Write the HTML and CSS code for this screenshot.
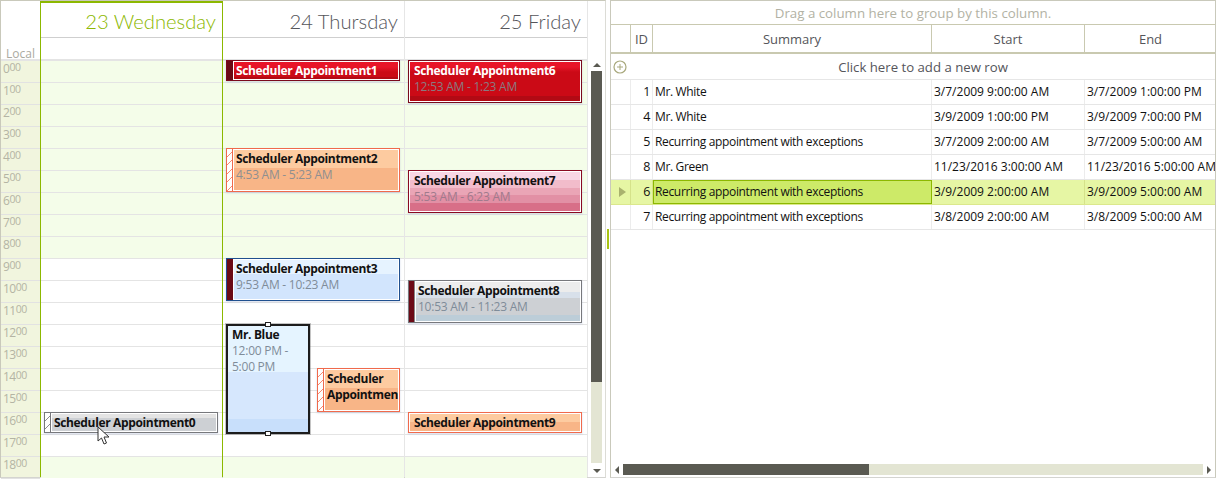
FILE: index.html
```html
<!DOCTYPE html>
<html>
<head>
    <title>Scheduler and grid</title>
    <link rel="stylesheet" href="styles.css">
</head>
<body>
    <div class="app">
        <!-- scheduler -->
        <div class="scheduler">
            <div class="ruler">
                <div class="ruler-head">Local</div>
                <div class="hour">0<sup>00</sup></div>
                <div class="hour">1<sup>00</sup></div>
                <div class="hour">2<sup>00</sup></div>
                <div class="hour">3<sup>00</sup></div>
                <div class="hour">4<sup>00</sup></div>
                <div class="hour">5<sup>00</sup></div>
                <div class="hour">6<sup>00</sup></div>
                <div class="hour">7<sup>00</sup></div>
                <div class="hour">8<sup>00</sup></div>
                <div class="hour">9<sup>00</sup></div>
                <div class="hour">10<sup>00</sup></div>
                <div class="hour">11<sup>00</sup></div>
                <div class="hour">12<sup>00</sup></div>
                <div class="hour">13<sup>00</sup></div>
                <div class="hour">14<sup>00</sup></div>
                <div class="hour">15<sup>00</sup></div>
                <div class="hour">16<sup>00</sup></div>
                <div class="hour">17<sup>00</sup></div>
                <div class="hour">18<sup>00</sup></div>
            </div>

            <div class="day today">
                <div class="day-title">23 Wednesday</div>
                <div class="all-day"></div>
                <div class="day-body">
                    <div class="appt silver hatch one-line" style="left:3px;top:351px;width:174px;height:21px">
                        <div class="strip"></div>
                        <div class="appt-body"><b>Scheduler Appointment0</b></div>
                    </div>
                    <svg class="cursor" width="14" height="20" viewBox="0 0 14 20">
                        <path d="M1 1 V15 L4.500 12 L7 18 L9.500 17 L7 11 H12 Z" fill="#fff" stroke="#333" stroke-width="1"/>
                    </svg>
                </div>
            </div>

            <div class="day">
                <div class="day-title">24 Thursday</div>
                <div class="all-day"></div>
                <div class="day-body">
                    <div class="appt red dark-strip one-line" style="left:3px;top:-1px;width:174px;height:21px">
                        <div class="strip"></div>
                        <div class="appt-body"><b>Scheduler Appointment1</b></div>
                    </div>
                    <div class="appt orange hatch" style="left:3px;top:87px;width:174px;height:44px">
                        <div class="strip"></div>
                        <div class="appt-body"><b>Scheduler Appointment2</b><span>4:53 AM - 5:23 AM</span></div>
                    </div>
                    <div class="appt blue dark-strip" style="left:3px;top:197px;width:174px;height:43px">
                        <div class="strip"></div>
                        <div class="appt-body"><b>Scheduler Appointment3</b><span>9:53 AM - 10:23 AM</span></div>
                    </div>
                    <div class="appt selected" style="left:3px;top:263px;width:84px;height:110px">
                        <div class="appt-body"><b>Mr. Blue</b><span>12:00 PM - 5:00 PM</span></div>
                        <i class="handle top"></i>
                        <i class="handle bottom"></i>
                    </div>
                    <div class="appt orange hatch narrow" style="left:94px;top:307px;width:83px;height:44px">
                        <div class="strip"></div>
                        <div class="appt-body"><b>Scheduler Appointment4</b></div>
                    </div>
                </div>
            </div>

            <div class="day last">
                <div class="day-title">25 Friday</div>
                <div class="all-day"></div>
                <div class="day-body">
                    <div class="appt red" style="left:3px;top:-1px;width:174px;height:43px">
                        <div class="appt-body"><b>Scheduler Appointment6</b><span>12:53 AM - 1:23 AM</span></div>
                    </div>
                    <div class="appt pink" style="left:3px;top:109px;width:174px;height:43px">
                        <div class="appt-body"><b>Scheduler Appointment7</b><span>5:53 AM - 6:23 AM</span></div>
                    </div>
                    <div class="appt silver dark-strip" style="left:3px;top:219px;width:174px;height:43px">
                        <div class="strip"></div>
                        <div class="appt-body"><b>Scheduler Appointment8</b><span>10:53 AM - 11:23 AM</span></div>
                    </div>
                    <div class="appt orange one-line" style="left:3px;top:351px;width:174px;height:21px">
                        <div class="appt-body"><b>Scheduler Appointment9</b></div>
                    </div>
                </div>
            </div>

            <div class="vscroll">
                <div class="arrow-up"></div>
                <div class="vtrack"><div class="vthumb"></div></div>
                <div class="arrow-down"></div>
            </div>
        </div>

        <!-- splitter -->
        <div class="splitter"><div class="grip"></div></div>

        <!-- grid -->
        <div class="gridview">
            <div class="group-panel">Drag a column here to group by this column.</div>
            <div class="row head">
                <div></div>
                <div class="cell-center">ID</div>
                <div class="cell-center">Summary</div>
                <div class="cell-center">Start</div>
                <div class="cell-center">End</div>
            </div>
            <div class="new-row">
                <svg class="plus" width="14" height="14" viewBox="0 0 14 14">
                    <circle cx="7" cy="7" r="6" fill="none" stroke="#a8a87c" stroke-width="1.200"/>
                    <path d="M7 4 V10 M4 7 H10" stroke="#a8a87c" stroke-width="1"/>
                </svg>
                <span>Click here to add a new row</span>
            </div>
            <div class="row">
                <div></div><div class="id">1</div><div>Mr. White</div><div>3/7/2009 9:00:00 AM</div><div>3/7/2009 1:00:00 PM</div>
            </div>
            <div class="row">
                <div></div><div class="id">4</div><div>Mr. White</div><div>3/9/2009 1:00:00 PM</div><div>3/9/2009 7:00:00 PM</div>
            </div>
            <div class="row">
                <div></div><div class="id">5</div><div>Recurring appointment with exceptions</div><div>3/7/2009 2:00:00 AM</div><div>3/7/2009 5:00:00 AM</div>
            </div>
            <div class="row">
                <div></div><div class="id">8</div><div>Mr. Green</div><div>11/23/2016 3:00:00 AM</div><div>11/23/2016 5:00:00 AM</div>
            </div>
            <div class="row current">
                <div><i class="row-arrow"></i></div><div class="id">6</div><div class="current-cell">Recurring appointment with exceptions</div><div>3/9/2009 2:00:00 AM</div><div>3/9/2009 5:00:00 AM</div>
            </div>
            <div class="row">
                <div></div><div class="id">7</div><div>Recurring appointment with exceptions</div><div>3/8/2009 2:00:00 AM</div><div>3/8/2009 5:00:00 AM</div>
            </div>
            <div class="hscroll">
                <div class="arrow-left"></div>
                <div class="htrack"><div class="hthumb"></div></div>
                <div class="arrow-right"></div>
            </div>
        </div>
    </div>
</body>
</html>
```

FILE: styles.css
```css
* {
    box-sizing: border-box;
}

body {
    margin: 0;
    background: #fff;
    font-family: "Open Sans", "Noto Sans", sans-serif;
    font-size: 12px;
    color: #111;
}

.app {
    display: flex;
    width: 1217px;
    height: 480px;
    overflow: hidden;
}

/* scheduler */
.scheduler {
    display: flex;
    width: 606px;
    height: 478px;
    border-top: 1px solid #c9c9bb;
    border-left: 1px solid #c9c9bb;
    border-right: 1px solid #dcdcd6;
    border-bottom: 1px solid #d4d4d0;
}

.ruler {
    width: 40px;
    flex: none;
    border-right: 1px solid #8cb800;
    background: #f1f5de;
}

.ruler-head {
    height: 60px;
    padding: 45px 5px 0 0;
    background: #fff;
    border-bottom: 2px solid #e4e4e4;
    text-align: right;
    font-size: 12px;
    line-height: 16px;
    color: #aaa9a0;
}

.hour {
    height: 22px;
    padding-left: 2px;
    border-bottom: 1px solid #e2e2e2;
    font-size: 12px;
    line-height: 16px;
    letter-spacing: -0.5px;
    color: #b4b4a4;
}

.hour sup {
    font-size: 10.500px;
    line-height: 0;
    vertical-align: 2px;
}

.day {
    width: 182px;
    flex: none;
    border-right: 1px solid #e6e6e6;
}

.day.today {
    border-right-color: #8cb800;
}

.day.last {
    width: 183px;
}

.day-title {
    height: 37px;
    padding: 4px 6px 0 0;
    border-top: 2px solid transparent;
    border-bottom: 1px solid #cfcfcf;
    text-align: right;
    font-family: "Lato", "Open Sans", sans-serif;
    font-size: 20.200px;
    font-weight: 300;
    line-height: 28px;
    color: #55555a;
    white-space: nowrap;
}

.today .day-title {
    border-top-color: #8cb800;
    color: #8cb800;
}

.all-day {
    height: 23px;
    border-bottom: 2px solid #e4e4e4;
}

.day-body {
    position: relative;
    height: 417px;
    background:
        repeating-linear-gradient(transparent 0 21px, #e4e4e4 21px 22px),
        linear-gradient(#f4fde9 198px, #fff 198px 396px, #f4fde9 396px);
}

/* appointments */
.appt {
    position: absolute;
    display: flex;
    overflow: hidden;
    border: 1px solid #888;
    box-shadow: 0 1px 2px rgba(120, 140, 190, 0.3);
}

.strip {
    width: 6px;
    flex: none;
    border-right: 1px solid #888;
}

.appt-body {
    flex: 1;
    min-width: 0;
    padding: 1px 0 0 2px;
    border: 1px solid #fff;
    line-height: 16px;
    overflow: hidden;
}

.appt-body:first-child {
    padding-left: 4px;
}

.appt-body b,
.appt-body span {
    display: block;
}

.appt-body b {
    letter-spacing: -0.35px;
}

.appt-body span {
    letter-spacing: -0.25px;
    color: #7f8c99;
}

.red {
    border-color: #7a0a1c;
}

.red .appt-body {
    background: linear-gradient(#e81528 0, #e81528 5px, #cb0a16 10px, #cb0a16 88%, #b20a14 88%);
    color: #fff;
}

.red .appt-body span {
    color: #8a7a80;
}

.dark-strip .strip {
    background: #6b0a16;
}

.red.dark-strip .strip {
    border-right-color: #6b0a16;
}

.blue {
    border-color: #20508f;
}

.blue .appt-body {
    background: linear-gradient(#e6f3ff 0 35%, #d2e5fd 35%);
}

.blue .strip {
    border-right-color: #6b0a16;
}

.pink {
    border-color: #8a0a22;
}

.pink .appt-body {
    background: linear-gradient(#f8d6e4 0 20%, #f2bccb 20% 40%, #eaa5b6 40% 60%, #e290a5 60% 80%, #d86f88 80%);
}

.pink .appt-body span {
    color: #a07a8c;
}

.silver {
    border-color: #77787c;
}

.silver .appt-body {
    background: linear-gradient(#ececec 0 25%, #d8e0ea 25% 40%, #cdd0d4 40% 85%, #bccdd8 85%);
}

.silver.one-line .appt-body {
    background: linear-gradient(#e4e4e4 0 25%, #cdd0d4 25%);
}

.orange {
    border-color: #f06a4c;
}

.orange .appt-body {
    background: linear-gradient(#fdcba0 0 45%, #f8b587 45%);
}

.orange .appt-body span {
    color: #8f8f90;
}

.hatch .strip {
    border-right-color: inherit;
    background: repeating-linear-gradient(135deg, #fff 0 5px, #f58a70 5px 6px);
}

.silver.hatch .strip {
    background: repeating-linear-gradient(135deg, #fff 0 5px, #8a8a8e 5px 6px);
}

.narrow b {
    white-space: normal;
    width: 90px;
}

.selected {
    overflow: visible;
    border: 2px solid #1c1c1c;
    box-shadow: 0 0 0 1px rgba(60, 60, 60, 0.3);
}

.selected .appt-body {
    padding: 1px 0 0 4px;
    background: linear-gradient(#e5f4ff 0 43%, #d6e7fd 43% 88%, #c8dffb 88%);
    border: 0;
}

.handle {
    position: absolute;
    left: 37px;
    width: 6px;
    height: 5px;
    background: #fff;
    border: 1px solid #222;
}

.handle.top {
    top: -4px;
}

.handle.bottom {
    bottom: -4px;
}

.cursor {
    position: absolute;
    left: 56px;
    top: 365px;
}

/* scrollbars */
.vscroll {
    position: relative;
    flex: 1;
}

.vtrack {
    position: absolute;
    left: 3px;
    top: 70px;
    width: 11px;
    height: 392px;
    background: #e3e5d3;
}

.vthumb {
    height: 311px;
    background: #5a5a52;
}

.arrow-up,
.arrow-down {
    position: absolute;
    left: 5px;
    width: 0;
    height: 0;
    border-left: 4px solid transparent;
    border-right: 4px solid transparent;
}

.arrow-up {
    top: 62px;
    border-bottom: 4px solid #5a5a52;
}

.arrow-down {
    top: 468px;
    border-top: 4px solid #5a5a52;
}

.splitter {
    position: relative;
    width: 4px;
    flex: none;
}

.grip {
    position: absolute;
    left: 1px;
    top: 229px;
    width: 2px;
    height: 20px;
    background: #a9c414;
}

/* grid */
.gridview {
    position: relative;
    width: 606px;
    height: 478px;
    flex: none;
    overflow: hidden;
    border-top: 1px solid #c9c9bb;
    border-left: 1px solid #c9c9bb;
    border-right: 1px solid #c9c9bb;
    border-bottom: 1px solid #d4d4d0;
}

.group-panel {
    height: 24px;
    border-bottom: 1px solid #c9c9b0;
    text-align: center;
    font-size: 13.300px;
    line-height: 25px;
    color: #b2b2a4;
}

.row {
    display: grid;
    grid-template-columns: 20px 22px 279px 153px 131px;
    height: 25px;
    border-bottom: 1px solid #e6e6e6;
    line-height: 24px;
}

.row > div {
    padding-left: 2px;
    border-right: 1px solid #ececec;
    white-space: nowrap;
    letter-spacing: -0.34px;
}

.row > div:nth-child(n+4) {
    letter-spacing: 0;
}

.row > div:last-child {
    border-right: 0;
}

.row .id {
    padding: 0 2px 0 0;
    text-align: right;
    font-size: 12.500px;
}

.row.head {
    height: 29px;
    border-bottom: 2px solid #c9c9b0;
    line-height: 28px;
}

.row.head > div {
    padding: 0;
    border-right: 1px solid #c9c9b0;
    font-size: 13px;
    letter-spacing: 0;
    color: #55555a;
}

.row.head > div:last-child {
    border-right: 0;
}

.cell-center {
    text-align: center;
}

.new-row {
    position: relative;
    height: 26px;
    padding-left: 20px;
    border-bottom: 1px solid #e6e6e6;
    text-align: center;
    font-size: 13.200px;
    line-height: 26px;
    color: #55555a;
}

.plus {
    position: absolute;
    left: 2px;
    top: 6px;
}

.row.current {
    background: #e6f6a4;
    border-bottom-color: #dbe88c;
}

.row.current > div {
    border-right-color: #d5e28a;
}

.row.current > .current-cell {
    background: #cdea68;
    border: 1px solid #8cb800;
    padding-left: 1px;
    line-height: 22px;
}

.row-arrow {
    display: block;
    width: 0;
    height: 0;
    margin: 7px 0 0 6px;
    border-top: 5px solid transparent;
    border-bottom: 5px solid transparent;
    border-left: 7px solid #a9b26e;
}

.hscroll {
    position: absolute;
    left: 0;
    right: 0;
    top: 463px;
    height: 11px;
}

.htrack {
    position: absolute;
    left: 12px;
    width: 580px;
    height: 11px;
    background: #e3e5d3;
}

.hthumb {
    width: 246px;
    height: 11px;
    background: #5a5a52;
}

.arrow-left,
.arrow-right {
    position: absolute;
    top: 2px;
    width: 0;
    height: 0;
    border-top: 4px solid transparent;
    border-bottom: 4px solid transparent;
}

.arrow-left {
    left: 4px;
    border-right: 4px solid #5a5a52;
}

.arrow-right {
    left: 596px;
    border-left: 4px solid #5a5a52;
}
```
